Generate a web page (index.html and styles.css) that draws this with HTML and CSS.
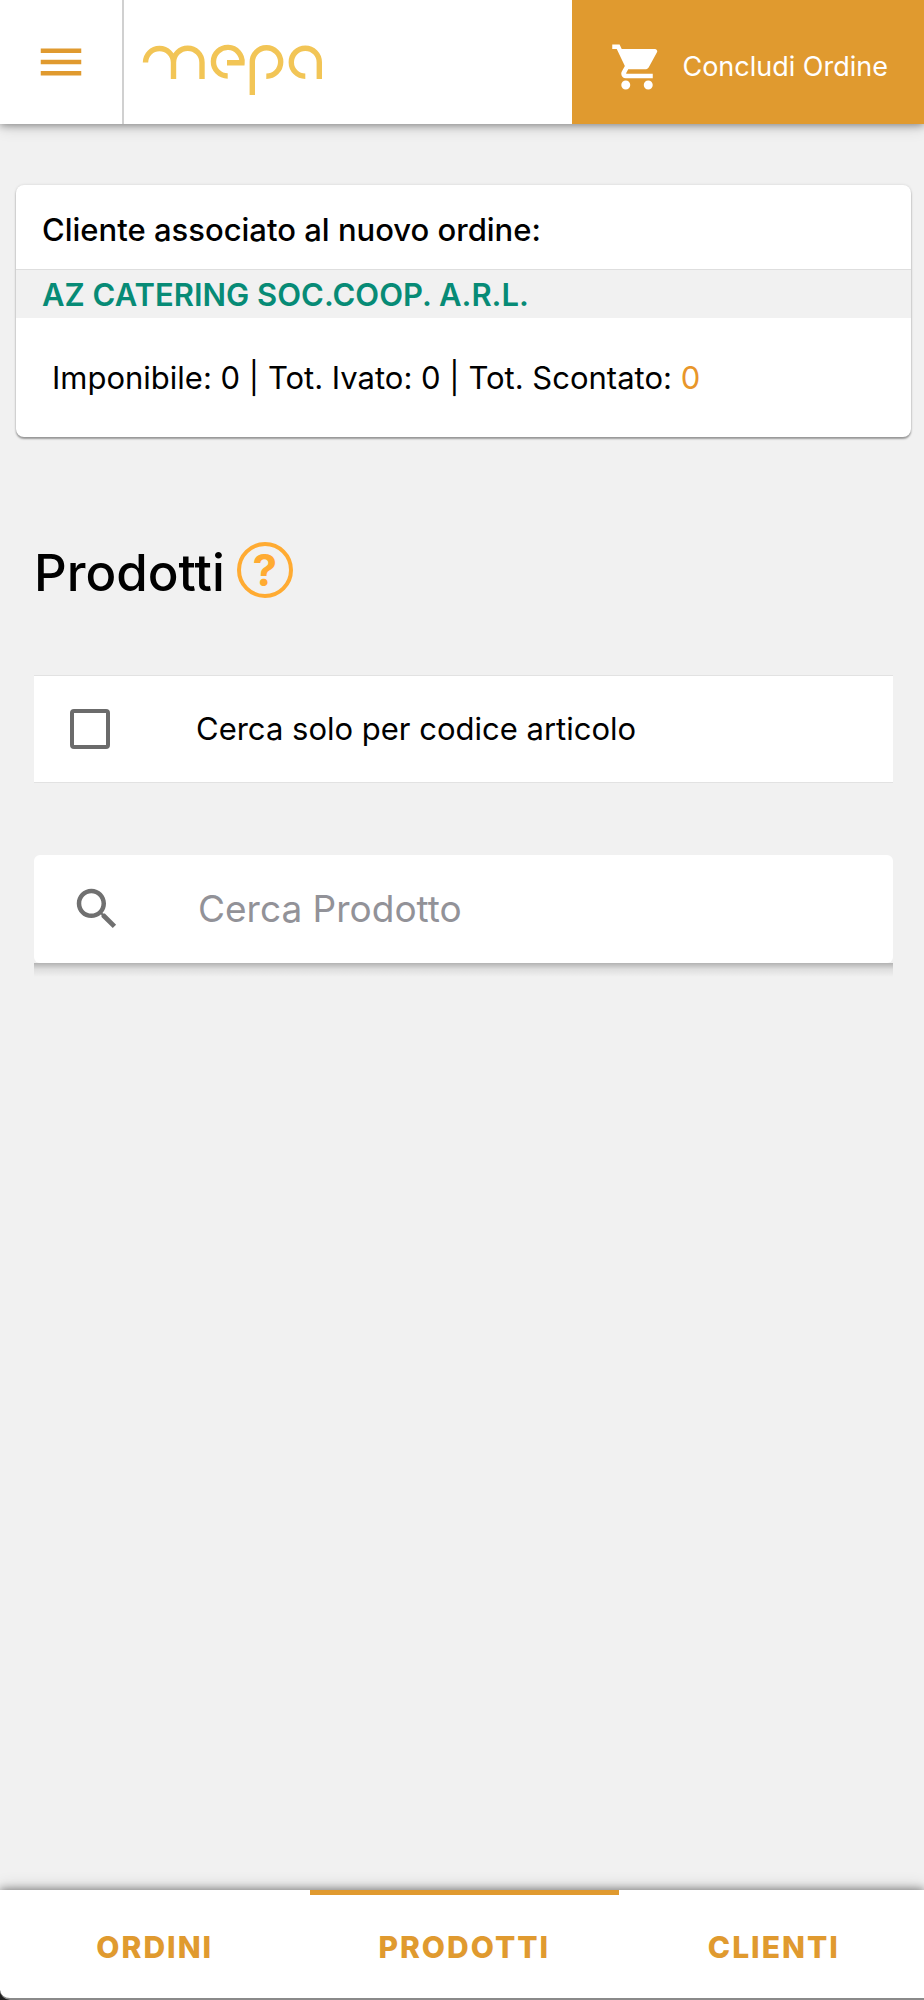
FILE: index.html
```html
<!DOCTYPE html>
<html lang="it">
<head>
<meta charset="utf-8">
<meta name="viewport" content="width=device-width, initial-scale=1">
<title>Mepa - Prodotti</title>
<link rel="stylesheet" href="styles.css">
</head>
<body class="page">
<header class="topbar">
  <button class="menu-button" type="button" aria-label="Menu">
    <svg class="icon" viewBox="0 0 24 24" aria-hidden="true"><path d="M3 18h18v-2H3v2zm0-5h18v-2H3v2zm0-7v2h18V6H3z"/></svg>
  </button>
  <a class="brand" href="#" aria-label="mepa">
    <svg class="logo" viewBox="142 44 182 52" aria-hidden="true">
      <path d="M145.5 62.5a14 14 0 0 1 28 0V79M173.5 62.5a14.2 14.2 0 0 1 28.5 0V79"/>
      <path d="M227.7 76a14.3 14.3 0 1 1 14.3-13.3H227"/>
      <path d="M252.3 95V62.3a14.2 14.2 0 1 1 14 13.9"/>
      <path d="M305.3 76.2a14 14 0 1 1 14-13.9V79"/>
    </svg>
  </a>
  <button class="checkout" type="button">
    <svg class="icon" viewBox="0 0 24 24" aria-hidden="true"><path d="M7 18c-1.1 0-1.99.9-1.99 2S5.900 22 7 22s2-.9 2-2-.9-2-2-2zM1 2v2h2l3.600 7.590-1.350 2.450c-.16.28-.25.61-.25.960 0 1.100.9 2 2 2h12v-2H7.420c-.14 0-.25-.11-.25-.25l.03-.12.900-1.630h7.450c.75 0 1.410-.41 1.750-1.030l3.580-6.490c.08-.14.120-.31.120-.480 0-.55-.45-1-1-1H5.210l-.94-2H1zm16 16c-1.100 0-1.990.9-1.990 2s.89 2 1.990 2 2-.9 2-2-.9-2-2-2z"/></svg>
    <span>Concludi Ordine</span>
  </button>
</header>

<main class="content">
  <section class="customer">
    <h2 class="customer-title">Cliente associato al nuovo ordine:</h2>
    <p class="customer-name">AZ CATERING SOC.COOP. A.R.L.</p>
    <p class="totals">Imponibile: 0 | Tot. Ivato: 0 | Tot. Scontato: <span class="discounted">0</span></p>
  </section>

  <section class="products">
    <div class="heading">
      <h1 class="title">Prodotti</h1>
      <button class="help" type="button" aria-label="Aiuto">?</button>
    </div>
    <label class="code-only">
      <input class="checkbox" type="checkbox">
      <span>Cerca solo per codice articolo</span>
    </label>
    <label class="search">
      <svg class="icon" viewBox="0 0 24 24" aria-hidden="true"><path d="M15.500 14h-.79l-.28-.27C15.410 12.590 16 11.110 16 9.500 16 5.910 13.090 3 9.500 3S3 5.910 3 9.500 5.910 16 9.500 16c1.610 0 3.090-.59 4.230-1.570l.27.28v.79l5 4.990L20.490 19l-4.990-5zm-6 0C7.010 14 5 11.990 5 9.500S7.010 5 9.500 5 14 7.010 14 9.500 11.990 14 9.500 14z"/></svg>
      <input class="search-input" type="search" placeholder="Cerca Prodotto" aria-label="Cerca Prodotto">
    </label>
  </section>
</main>

<div class="dock">
  <nav class="tabs">
    <a class="tab" href="#">ORDINI</a>
    <a class="tab tab-active" href="#" aria-current="page">PRODOTTI</a>
    <a class="tab" href="#">CLIENTI</a>
  </nav>
</div>
</body>
</html>
```
FILE: styles.css
```css
* { box-sizing: border-box; }

.page {
  margin: 0;
  min-height: 100vh;
  display: flex;
  flex-direction: column;
  background: #f1f1f1;
  color: #000;
  font-family: Inter, "Liberation Sans", sans-serif;
  font-size: 31px;
  line-height: 40px;
}

button, input { font: inherit; }

.icon {
  display: block;
  flex: none;
  width: 54px;
  height: 54px;
  fill: currentColor;
}

.topbar {
  display: flex;
  min-height: 124px;
  background: #fff;
  box-shadow: 0 2px 16px rgba(0, 0, 0, .16), 0 1px 8px rgba(0, 0, 0, .4);
}

.menu-button {
  display: flex;
  align-items: center;
  justify-content: center;
  width: 124px;
  padding: 0;
  border: 0;
  border-right: 2px solid #d0d0d0;
  background: none;
  color: #e09a2f;
}

.brand {
  flex: 1;
  display: flex;
  align-items: center;
  padding: 16px 18px 0;
}

.logo {
  width: 182px;
  height: 52px;
  fill: none;
  stroke: #f2c556;
  stroke-width: 5.400;
}

.checkout {
  display: flex;
  align-items: center;
  gap: 18px;
  padding: 10px 36px 0 38px;
  border: 0;
  background: #e09a2f;
  color: #fff;
  font-size: 27px;
}

.content {
  flex: 1;
  padding: 61px 13px 0 16px;
}

.customer {
  border-radius: 8px;
  background: #fff;
  box-shadow: 0 2px 2px rgba(0, 0, 0, .35), 0 0 3px rgba(0, 0, 0, .12);
}

.customer-title {
  margin: 0;
  padding: 25px 26px 19px;
  border-bottom: 1px solid #dedede;
  font-size: 31px;
  font-weight: 500;
}

.customer-name {
  margin: 0;
  padding: 5px 26px 3px;
  background: #f1f1f1;
  color: #078b76;
  font-weight: 600;
}

.totals {
  margin: 0;
  padding: 40px 36px 39px;
}

.discounted { color: #e8962a; }

.products { padding: 97px 18px 60px; }

.heading {
  display: flex;
  align-items: center;
  gap: 12px;
  margin-bottom: 69px;
}

.title {
  margin: 0;
  padding-top: 6px;
  font-size: 51px;
  font-weight: 500;
  line-height: 66px;
}

.help {
  width: 56px;
  height: 56px;
  padding: 0;
  border: 4px solid #ffab32;
  border-radius: 50%;
  background: none;
  color: #ffab32;
  font-size: 44px;
  font-weight: 700;
  line-height: 48px;
}

.code-only {
  display: flex;
  align-items: center;
  gap: 86px;
  min-height: 108px;
  padding: 0 36px;
  border: solid #e2e2e2;
  border-width: 1px 0;
  background: #fff;
}

.checkbox {
  appearance: none;
  flex: none;
  width: 40px;
  height: 40px;
  margin: 0;
  border: 4px solid #6b6b6b;
  border-radius: 4px;
}

.checkbox:checked { background: #e09a2f; }

.search {
  position: relative;
  display: flex;
  align-items: center;
  gap: 74px;
  min-height: 108px;
  margin-top: 72px;
  padding: 0 36px;
  border-radius: 6px;
  background: #fff;
  color: #707070;
}

.search::after {
  content: "";
  position: absolute;
  top: 100%;
  left: 0;
  right: 0;
  height: 14px;
  background: linear-gradient(rgba(0, 0, 0, .26), rgba(0, 0, 0, .08) 45%, transparent);
}

.search-input {
  flex: 1;
  min-width: 0;
  padding: 0;
  border: 0;
  outline: 0;
  background: none;
  color: #000;
  font-size: 37px;
  line-height: 48px;
}

.search-input::placeholder { color: #929298; opacity: 1; }

.dock {
  background: #202020;
  box-shadow: 0 -2px 16px rgba(0, 0, 0, .16), 0 -1px 8px rgba(0, 0, 0, .4);
}

.tabs {
  display: flex;
  min-height: 110px;
  overflow: hidden;
  border-bottom: 2px solid #8a8a8a;
  border-bottom-left-radius: 10px;
  background: #fff;
}

.tab {
  flex: 0 0 33.5%;
  display: flex;
  align-items: center;
  justify-content: center;
  border: solid transparent;
  border-width: 5px 0 0;
  color: #e09a2f;
  font-weight: 800;
  font-size: 30px;
  letter-spacing: 2px;
  text-decoration: none;
}

.tab-active { border-color: #e09a2f; }
```
